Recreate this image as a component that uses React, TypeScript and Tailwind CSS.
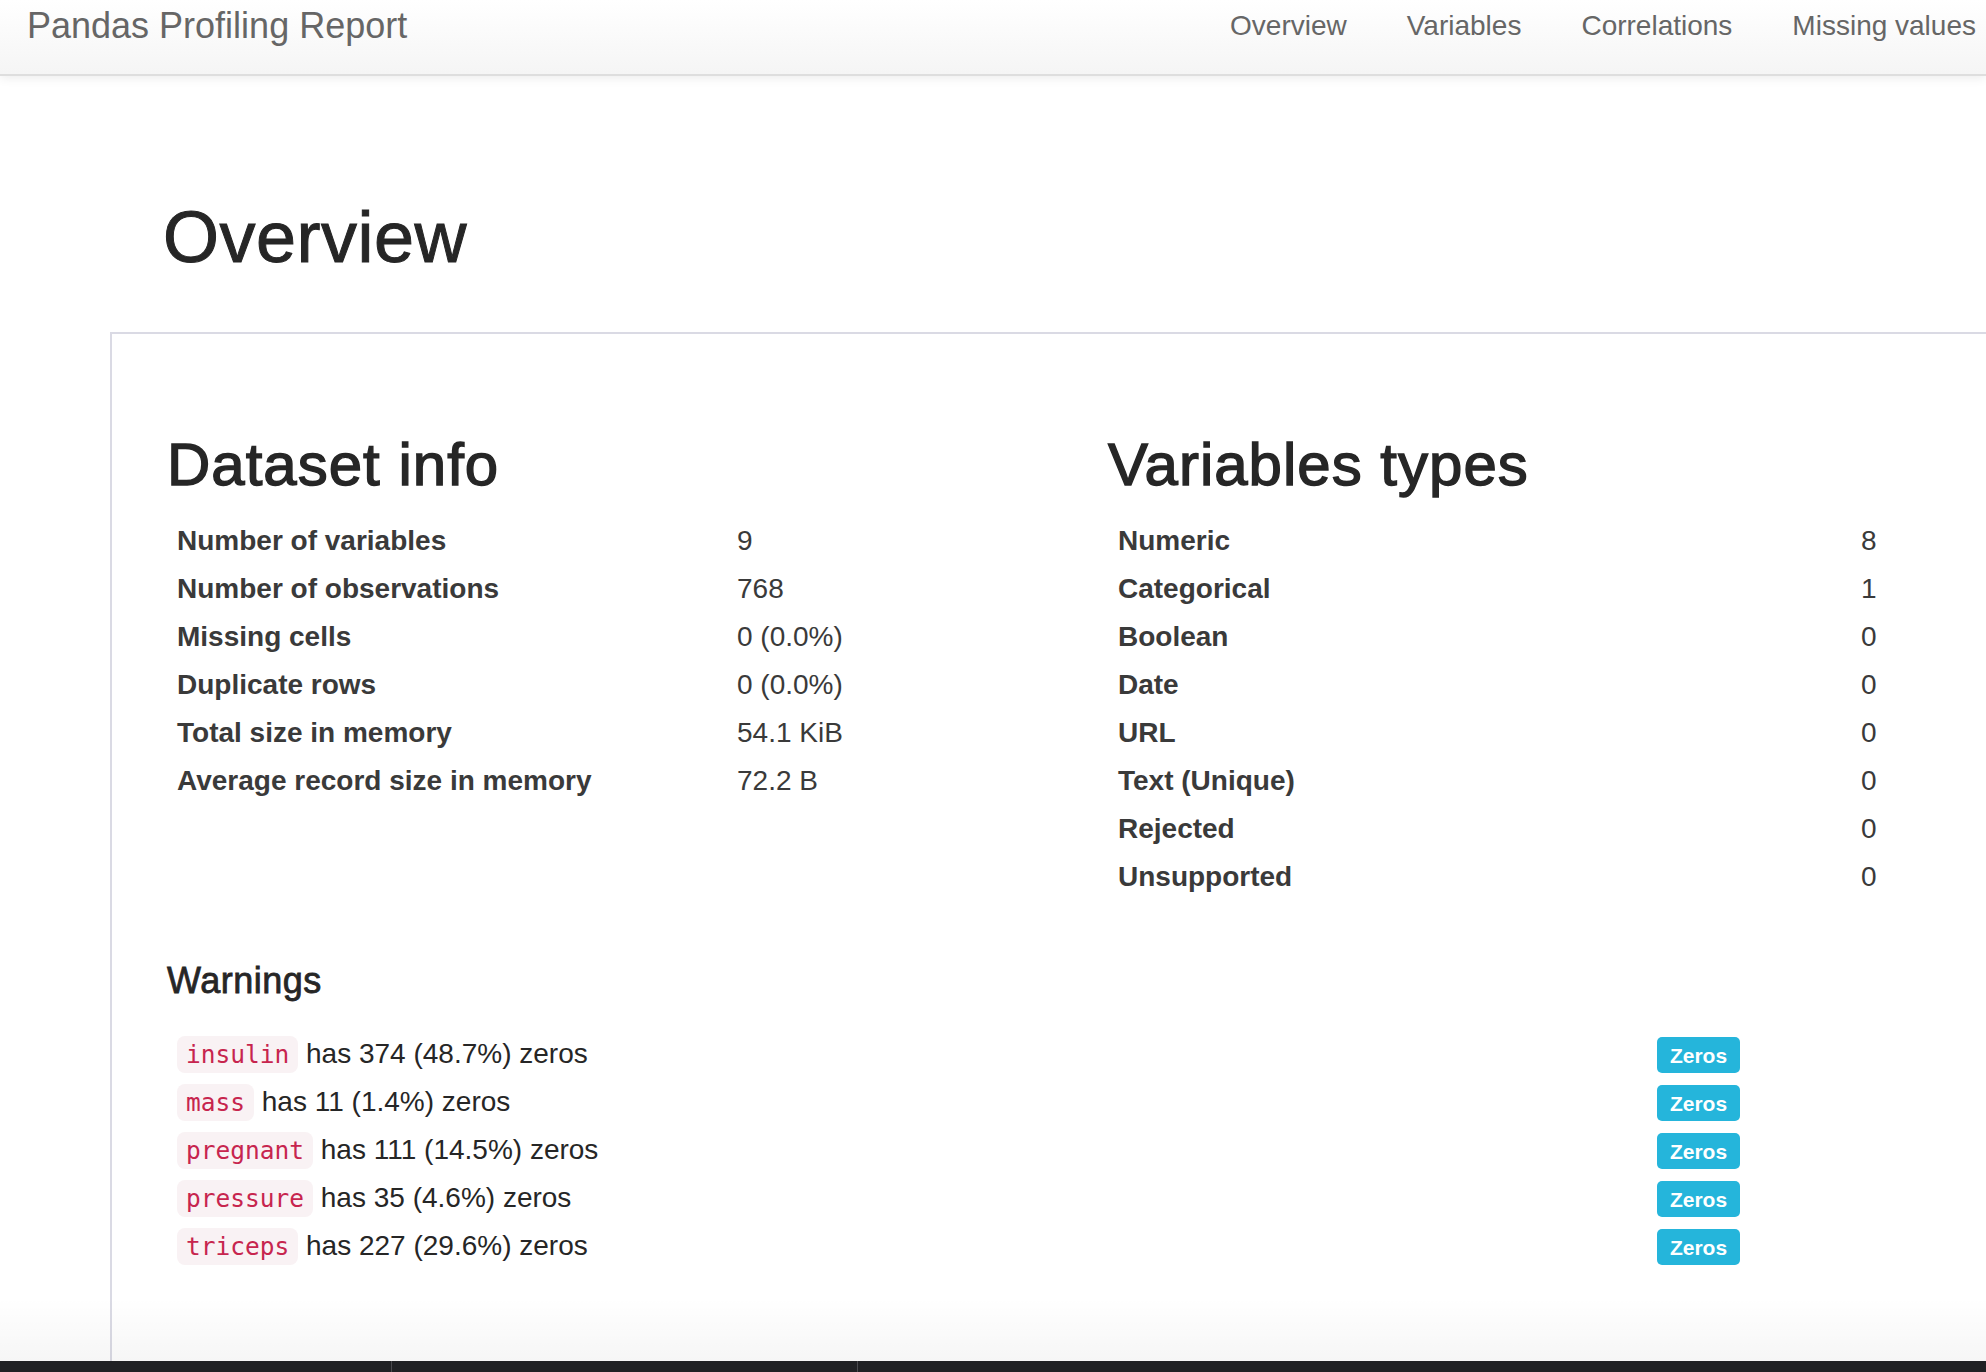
import React from 'react';

const navLinks = ['Overview', 'Variables', 'Correlations', 'Missing values'];

const datasetInfo: [string, string][] = [
  ['Number of variables', '9'],
  ['Number of observations', '768'],
  ['Missing cells', '0 (0.0%)'],
  ['Duplicate rows', '0 (0.0%)'],
  ['Total size in memory', '54.1 KiB'],
  ['Average record size in memory', '72.2 B'],
];

const varTypes: [string, string][] = [
  ['Numeric', '8'],
  ['Categorical', '1'],
  ['Boolean', '0'],
  ['Date', '0'],
  ['URL', '0'],
  ['Text (Unique)', '0'],
  ['Rejected', '0'],
  ['Unsupported', '0'],
];

const warnings = [
  { name: 'insulin', text: 'has 374 (48.7%) zeros' },
  { name: 'mass', text: 'has 11 (1.4%) zeros' },
  { name: 'pregnant', text: 'has 111 (14.5%) zeros' },
  { name: 'pressure', text: 'has 35 (4.6%) zeros' },
  { name: 'triceps', text: 'has 227 (29.6%) zeros' },
];

export default function App() {
  return (
    <div className="relative h-[1372px] w-[1986px] overflow-hidden bg-white flex flex-col font-['Liberation_Sans',Arial,sans-serif]">
      {/* Navbar */}
      <nav className="relative z-10 h-[76px] shrink-0 flex justify-between border-b-2 border-[#dedede] bg-gradient-to-b from-white to-[#f5f5f5] shadow-[0_2px_10px_rgba(0,0,0,0.08)]">
        <div className="pl-[27px] pt-[8px] text-[36px] leading-[36px] text-[#666] whitespace-nowrap">
          Pandas Profiling Report
        </div>
        <ul className="flex flex-none mr-[-20px] pt-[12px] text-[28px] leading-[28px] text-[#666] whitespace-nowrap">
          {navLinks.map((l) => (
            <li key={l} className="px-[30px]">{l}</li>
          ))}
        </ul>
      </nav>

      {/* Main */}
      <main className="flex-1 min-h-0 flex flex-col pl-[110px]">
        <h1 className="ml-[53px] mt-[125px] text-[72px] leading-[72px] tracking-[0.5px] text-[#262626] [-webkit-text-stroke:1px_#262626]">
          Overview
        </h1>

        <section className="mt-[59px] flex-1 border-l-2 border-t-2 border-[#dadae4] pl-[55px] pt-[101px]">
          <div className="flex">
            {/* Dataset info */}
            <div className="w-[941px] flex-none">
              <h2 className="text-[60px] leading-[60px] tracking-[1px] text-[#262626] [-webkit-text-stroke:1.4px_#262626]">
                Dataset info
              </h2>
              <div className="mt-[22px] text-[28px] leading-[40px] text-[#3a3a3a]">
                {datasetInfo.map(([k, v]) => (
                  <div key={k} className="flex h-[48px] py-[4px]">
                    <div className="w-[560px] pl-[10px] font-bold">{k}</div>
                    <div className="pl-[10px]">{v}</div>
                  </div>
                ))}
              </div>
            </div>

            {/* Variables types */}
            <div className="flex-1">
              <h2 className="text-[60px] leading-[60px] tracking-[1px] text-[#262626] [-webkit-text-stroke:1.4px_#262626]">
                Variables types
              </h2>
              <div className="mt-[22px] text-[28px] leading-[40px] text-[#3a3a3a]">
                {varTypes.map(([k, v]) => (
                  <div key={k} className="flex h-[48px] py-[4px]">
                    <div className="w-[743px] pl-[10px] font-bold">{k}</div>
                    <div className="pl-[10px]">{v}</div>
                  </div>
                ))}
              </div>
            </div>
          </div>

          {/* Warnings */}
          <h4 className="mt-[62px] text-[36px] leading-[36px] tracking-[0.5px] text-[#262626] [-webkit-text-stroke:0.8px_#262626]">
            Warnings
          </h4>
          <div className="mt-[31px] text-[28px] leading-[40px] text-[#262626]">
            {warnings.map((w) => (
              <div key={w.name} className="flex items-center h-[48px] py-[4px]">
                <div className="w-[1480px] pl-[10px] whitespace-nowrap">
                  <code className="font-['DejaVu_Sans_Mono',monospace] text-[24.5px] px-[9px] py-[4px] rounded-[8px] bg-[#f9f2f4] text-[#c7254e]">
                    {w.name}
                  </code>{' '}
                  {w.text}
                </div>
                <div className="pl-[10px]">
                  <span className="mt-[2px] flex items-center justify-center w-[83px] h-[36px] rounded-[5px] bg-[#25b5db] text-white font-bold text-[21px] leading-none">
                    Zeros
                  </span>
                </div>
              </div>
            ))}
          </div>
        </section>
      </main>

      {/* bottom fade */}
      <div className="pointer-events-none absolute left-0 right-0 bottom-[11px] h-[64px] bg-gradient-to-b from-transparent to-[rgba(0,0,0,0.035)]" />

      {/* bottom dark strip */}
      <div className="h-[11px] shrink-0 bg-[#202124] flex">
        <div className="w-[392px] border-r border-[#4a4a4e]" />
        <div className="w-[466px] border-r border-[#4a4a4e]" />
      </div>
    </div>
  );
}
